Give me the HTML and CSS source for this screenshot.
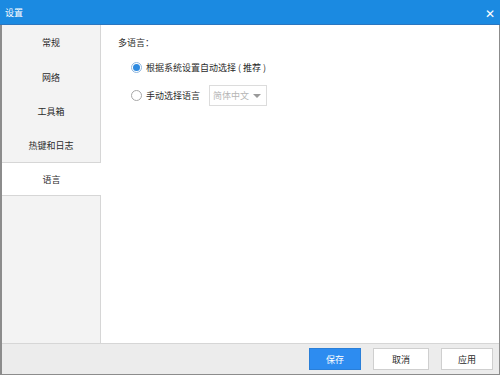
FILE: index.html
```html
<!DOCTYPE html>
<html lang="en">
<head>
  <meta charset="UTF-8" />
  <title>设置</title>
  <link rel="stylesheet" href="styles.css">
</head>
<body>
  <div class="win">
    <div class="title-bar">
      <span>设置</span>
      <span class="close">✕</span>
    </div>
    <div class="main">
      <div class="side">
        <div class="tab">常规</div>
        <div class="tab">网络</div>
        <div class="tab">工具箱</div>
        <div class="tab">热键和日志</div>
        <div class="tab active">语言</div>
        <div class="side-rest"></div>
      </div>
      <div class="content">
        <div class="label">多语言：</div>
        <div class="opt">
          <span class="radio on"></span>
          <span>根据系统设置自动选择 ( 推荐 )</span>
        </div>
        <div class="opt">
          <span class="radio"></span>
          <span>手动选择语言</span>
          <div class="select">
            <span>简体中文</span>
            <span class="arrow"></span>
          </div>
        </div>
      </div>
    </div>
    <div class="footer">
      <button class="btn primary">保存</button>
      <button class="btn wide">取消</button>
      <button class="btn">应用</button>
    </div>
  </div>
</body>
</html>
```

FILE: styles.css
```css
* { box-sizing: border-box; }
body {
  margin: 0;
  font-family: "Noto Sans CJK SC", "Noto Sans", sans-serif;
  font-size: 9px;
  color: #2b2b2b;
}
.win {
  width: 500px;
  height: 375px;
  display: flex;
  flex-direction: column;
  border-left: 2px solid #8c8c8c;
  border-right: 1px solid #8c8c8c;
  border-bottom: 1px solid #8c8c8c;
  background: #fff;
}
.title-bar {
  height: 25px;
  background: #1b8ae1;
  border-bottom: 1px solid #2a76c0;
  color: #fff;
  display: flex;
  justify-content: space-between;
  align-items: center;
  padding: 0 5px 0 5px;
  margin-left: -2px;
  margin-right: -1px;
  font-size: 9px;
}
.close {
  font-size: 12px;
}
.main {
  flex: 1;
  display: flex;
  min-height: 0;
}
.side {
  width: 99px;
  display: flex;
  flex-direction: column;
}
.tab {
  height: 34px;
  display: flex;
  align-items: center;
  justify-content: center;
  background: #f3f3f3;
  border-right: 1px solid #d6d6d6;
}
.tab:first-child { height: 35px; }
.tab.active {
  background: #fff;
  border-right: none;
  border-top: 1px solid #d6d6d6;
  border-bottom: 1px solid #d6d6d6;
}
.side-rest {
  flex: 1;
  background: #f3f3f3;
  border-right: 1px solid #d6d6d6;
}
.content {
  flex: 1;
  padding: 10px 0 0 17px;
}
.label {
  line-height: 16px;
}
.opt {
  display: flex;
  align-items: center;
  gap: 4px;
  margin-left: 13px;
  margin-top: 6px;
  height: 21px;
}
.opt + .opt { margin-top: 7px; }
.radio {
  width: 11px;
  height: 11px;
  border: 1px solid #a8a8a8;
  border-radius: 50%;
  background: #fff;
  position: relative;
}
.radio.on {
  border-color: #8fb8e0;
}
.radio.on::after {
  content: "";
  position: absolute;
  left: 1px;
  top: 1px;
  width: 7px;
  height: 7px;
  border-radius: 50%;
  background: #2d8ae0;
}
.select {
  margin-left: 5px;
  width: 58px;
  height: 21px;
  border: 1px solid #dcdcdc;
  display: flex;
  align-items: center;
  justify-content: space-between;
  padding: 0 5px 0 3px;
  color: #b5b5b5;
  white-space: nowrap;
}
.arrow {
  width: 0;
  height: 0;
  border-left: 4px solid transparent;
  border-right: 4px solid transparent;
  border-top: 4px solid #9a9a9a;
}
.footer {
  height: 31px;
  background: #ececec;
  border-top: 1px solid #d6d6d6;
  display: flex;
  justify-content: flex-end;
  align-items: center;
  gap: 12px;
  padding-right: 6px;
}
.btn {
  width: 52px;
  height: 22px;
  border: 1px solid #cfcfcf;
  background: #fff;
  font-family: inherit;
  font-size: 9px;
  color: #2b2b2b;
  padding: 0;
}
.btn.wide { width: 56px; }
.btn.primary {
  background: #2d8cf0;
  border-color: #2a7fd8;
  color: #fff;
}
```
